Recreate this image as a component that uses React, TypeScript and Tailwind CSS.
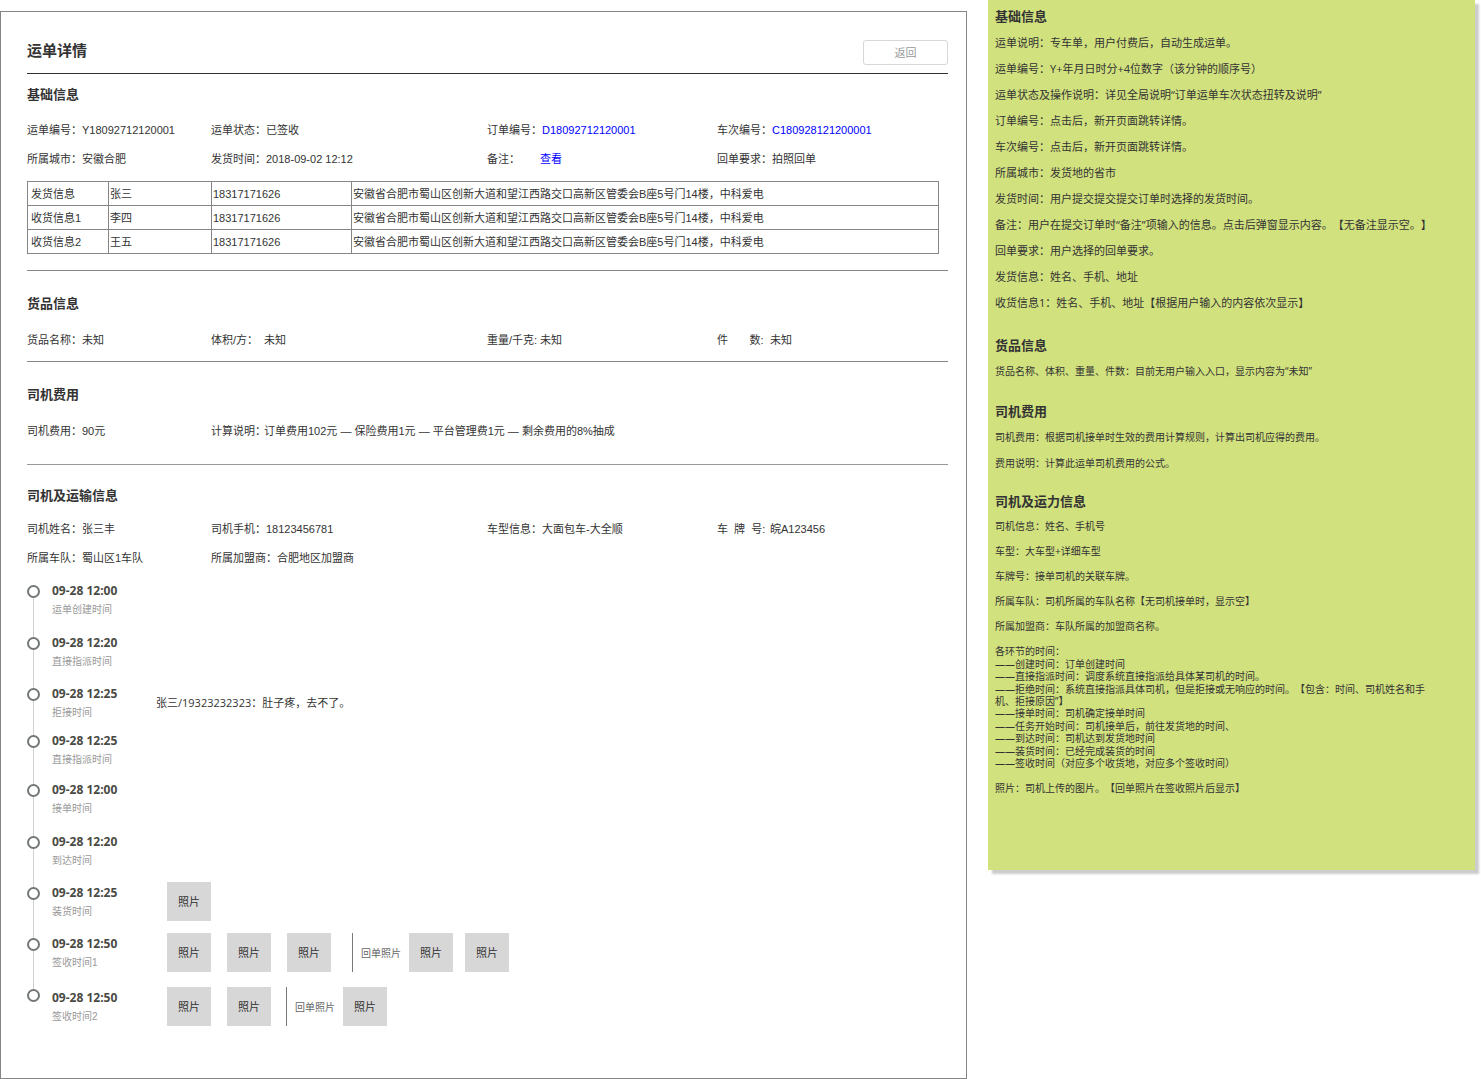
import { ReactNode } from "react";

interface FieldProps {
  label: string;
  children: ReactNode;
}

interface TimelineEvent {
  time: string;
  label: string;
  height: string;
  remark?: string;
  photos?: number;
  receipts?: number;
}

const contacts = [
  { type: "发货信息", name: "张三", phone: "18317171626" },
  { type: "收货信息1", name: "李四", phone: "18317171626" },
  { type: "收货信息2", name: "王五", phone: "18317171626" },
];

const address =
  "安徽省合肥市蜀山区创新大道和望江西路交口高新区管委会B座5号门14楼，中科爱电";

const events: TimelineEvent[] = [
  { time: "09-28 12:00", label: "运单创建时间", height: "min-h-[52px]" },
  { time: "09-28 12:20", label: "直接指派时间", height: "min-h-[51px]" },
  {
    time: "09-28 12:25",
    label: "拒接时间",
    height: "min-h-[47px]",
    remark: "张三/19323232323：肚子疼，去不了。",
  },
  { time: "09-28 12:25", label: "直接指派时间", height: "min-h-[49px]" },
  { time: "09-28 12:00", label: "接单时间", height: "min-h-[52px]" },
  { time: "09-28 12:20", label: "到达时间", height: "min-h-[51px]" },
  { time: "09-28 12:25", label: "装货时间", height: "min-h-[51px]", photos: 1 },
  {
    time: "09-28 12:50",
    label: "签收时间1",
    height: "min-h-[51px]",
    photos: 3,
    receipts: 2,
  },
  {
    time: "09-28 12:50",
    label: "签收时间2",
    height: "min-h-[44px]",
    photos: 2,
    receipts: 1,
  },
];

const basicNotes = [
  "运单说明：专车单，用户付费后，自动生成运单。",
  "运单编号：Y+年月日时分+4位数字（该分钟的顺序号）",
  "运单状态及操作说明：详见全局说明“订单运单车次状态扭转及说明”",
  "订单编号：点击后，新开页面跳转详情。",
  "车次编号：点击后，新开页面跳转详情。",
  "所属城市：发货地的省市",
  "发货时间：用户提交提交提交订单时选择的发货时间。",
  "备注：用户在提交订单时“备注”项输入的信息。点击后弹窗显示内容。【无备注显示空。】",
  "回单要求：用户选择的回单要求。",
  "发货信息：姓名、手机、地址",
  "收货信息1：姓名、手机、地址【根据用户输入的内容依次显示】",
];

const driverNotes = [
  "司机信息：姓名、手机号",
  "车型：大车型+详细车型",
  "车牌号：接单司机的关联车牌。",
  "所属车队：司机所属的车队名称【无司机接单时，显示空】",
  "所属加盟商：车队所属的加盟商名称。",
];

const stepNotes = [
  "各环节的时间：",
  "——创建时间：订单创建时间",
  "——直接指派时间：调度系统直接指派给具体某司机的时间。",
  "——拒绝时间：系统直接指派具体司机，但是拒接或无响应的时间。【包含：时间、司机姓名和手机、拒接原因”】",
  "——接单时间：司机确定接单时间",
  "——任务开始时间：司机接单后，前往发货地的时间、",
  "——到达时间：司机达到发货地时间",
  "——装货时间：已经完成装货的时间",
  "——签收时间（对应多个收货地，对应多个签收时间）",
];

function Field({ label, children }: FieldProps) {
  return (
    <div className="flex whitespace-pre">
      <dt className="min-w-[53px]">{label}</dt>
      <dd>{children}</dd>
    </div>
  );
}

function FieldGrid({ children }: { children: ReactNode }) {
  return (
    <dl className="grid grid-cols-[minmax(0,184fr)_minmax(0,276fr)_minmax(0,230fr)_minmax(0,231fr)] gap-y-[13px] leading-4">
      {children}
    </dl>
  );
}

function SectionTitle({ children }: { children: ReactNode }) {
  return <h2 className="text-[13px] leading-5 font-bold">{children}</h2>;
}

function Photo() {
  return (
    <div className="flex h-[39px] w-11 shrink-0 items-center justify-center bg-[#d7d7d7] pt-px">
      照片
    </div>
  );
}

function EventRow({ event, first, last }: { event: TimelineEvent; first: boolean; last: boolean }) {
  const photos = Array.from({ length: event.photos ?? 0 });
  const receipts = Array.from({ length: event.receipts ?? 0 });

  return (
    <li className={`flex ${event.height}`}>
      <div className="mr-3 flex w-[13px] flex-col items-center">
        <span className={first ? "h-[5px]" : "h-[5px] w-px bg-[#d0d0d0]"} />
        <span className="size-[13px] rounded-full border-2 border-[#737777]" />
        {!last && <span className="w-px flex-1 bg-[#d0d0d0]" />}
      </div>
      <div className={last ? "w-[104px] pt-[6px]" : "w-[104px] pt-[3px]"}>
        <p className="font-['Open_Sans','Noto_Sans_CJK_SC',sans-serif] text-[12px] leading-4 font-bold text-[#4a4a44]">
          {event.time}
        </p>
        <p className="text-[10px] leading-[22px] text-[#999999]">{event.label}</p>
      </div>
      {event.remark && (
        <p className="pt-3 font-['Open_Sans','Noto_Sans_CJK_SC',sans-serif] leading-4">
          {event.remark}
        </p>
      )}
      {event.photos && (
        <div className={last ? "ml-[11px] flex pt-[3px]" : "ml-[11px] flex"}>
          <div className="flex gap-4">
            {photos.map((_, i) => (
              <Photo key={i} />
            ))}
          </div>
          {event.receipts && (
            <div
              className={
                last
                  ? "ml-[15px] flex h-[39px] items-center gap-2 border-l border-[#797979] pl-2"
                  : "ml-[21px] flex h-[39px] items-center gap-2 border-l border-[#797979] pl-2"
              }
            >
              <span className="pt-px text-[10px] text-[#666666]">回单照片</span>
              <div className="flex gap-3">
                {receipts.map((_, i) => (
                  <Photo key={i} />
                ))}
              </div>
            </div>
          )}
        </div>
      )}
    </li>
  );
}

function WaybillDetail() {
  return (
    <main className="mt-[11px] border border-[#868686] pt-7 pr-[18px] pb-[50px] pl-[26px]">
      <header className="flex items-start justify-between border-b border-[#333333] pb-2">
        <h1 className="text-[15px] leading-[22px] font-bold">运单详情</h1>
        <button
          type="button"
          className="h-[25px] w-[85px] cursor-pointer rounded-[3px] border border-[#d7d7d7] pt-px text-[#999999]"
        >
          返回
        </button>
      </header>

      <section className="flex flex-col gap-[17px] border-b border-[#868686] pt-[11px] pb-4">
        <SectionTitle>基础信息</SectionTitle>
        <div className="flex flex-col gap-[14px]">
          <FieldGrid>
            <Field label="运单编号：">Y18092712120001</Field>
            <Field label="运单状态：">已签收</Field>
            <Field label="订单编号：">
              <a href="#order" className="text-[#0000ff]">
                D18092712120001
              </a>
            </Field>
            <Field label="车次编号：">
              <a href="#trip" className="text-[#0000ff]">
                C180928121200001
              </a>
            </Field>
            <Field label="所属城市：">安徽合肥</Field>
            <Field label="发货时间：">2018-09-02 12:12</Field>
            <Field label="备注：">
              <a href="#remark" className="text-[#0000ff]">
                查看
              </a>
            </Field>
            <Field label="回单要求：">拍照回单</Field>
          </FieldGrid>

          <div className="pr-[9px]">
            <table className="w-full table-fixed border-collapse">
              <colgroup>
                <col className="w-[81px]" />
                <col className="w-[103px]" />
                <col className="w-[140px]" />
                <col />
              </colgroup>
              <tbody>
                {contacts.map((contact) => (
                  <tr key={contact.type} className="h-6">
                    <th className="border border-[#868686] pt-px pl-[3px] text-left font-normal">
                      {contact.type}
                    </th>
                    <td className="border border-[#868686] pt-px pl-px">{contact.name}</td>
                    <td className="border border-[#868686] pt-px pl-px">{contact.phone}</td>
                    <td className="border border-[#868686] pt-px pl-px">{address}</td>
                  </tr>
                ))}
              </tbody>
            </table>
          </div>
        </div>
      </section>

      <section className="flex flex-col gap-[18px] border-b border-[#868686] pt-[23px] pb-[13px]">
        <SectionTitle>货品信息</SectionTitle>
        <FieldGrid>
          <Field label="货品名称：">未知</Field>
          <Field label="体积/方：">未知</Field>
          <Field label="重量/千克:">未知</Field>
          <Field label="件       数:">未知</Field>
        </FieldGrid>
      </section>

      <section className="flex flex-col gap-[18px] border-b border-[#999999] pt-[23px] pb-[25px]">
        <SectionTitle>司机费用</SectionTitle>
        <FieldGrid>
          <Field label="司机费用：">90元</Field>
          <Field label="计算说明：">
            订单费用102元 — 保险费用1元 — 平台管理费1元 — 剩余费用的8%抽成
          </Field>
        </FieldGrid>
      </section>

      <section className="flex flex-col gap-[15px] pt-[21px]">
        <SectionTitle>司机及运输信息</SectionTitle>
        <FieldGrid>
          <Field label="司机姓名：">张三丰</Field>
          <Field label="司机手机：">18123456781</Field>
          <Field label="车型信息：">大面包车-大全顺</Field>
          <Field label="车  牌  号:">皖A123456</Field>
          <Field label="所属车队：">蜀山区1车队</Field>
          <Field label="所属加盟商：">合肥地区加盟商</Field>
        </FieldGrid>
      </section>

      <ol className="pt-[14px]">
        {events.map((event, i) => (
          <EventRow
            key={i}
            event={event}
            first={i === 0}
            last={i === events.length - 1}
          />
        ))}
      </ol>
    </main>
  );
}

function NotesTitle({ children }: { children: ReactNode }) {
  return <h2 className="text-[13px] leading-[26px] font-bold">{children}</h2>;
}

function Notes() {
  return (
    <aside className="self-start bg-[#d1e17e] px-[7px] pt-[3px] pb-[76px] font-['Open_Sans','Noto_Sans_CJK_SC',sans-serif] shadow-[4px_4px_2px_#cccccc] [text-spacing-trim:space-all]">
      <NotesTitle>基础信息</NotesTitle>
      <div className="pt-px leading-[26px]">
        {basicNotes.map((note) => (
          <p key={note}>{note}</p>
        ))}
      </div>

      <div className="pt-4 text-[10px] leading-[26px]">
        <NotesTitle>货品信息</NotesTitle>
        <p>货品名称、体积、重量、件数：目前无用户输入入口，显示内容为“未知”</p>
      </div>

      <div className="pt-[14px] text-[10px] leading-[26px]">
        <NotesTitle>司机费用</NotesTitle>
        <p>司机费用：根据司机接单时生效的费用计算规则，计算出司机应得的费用。</p>
        <p>费用说明：计算此运单司机费用的公式。</p>
      </div>

      <div className="pt-3 text-[10px] leading-[25px]">
        <NotesTitle>司机及运力信息</NotesTitle>
        {driverNotes.map((note) => (
          <p key={note}>{note}</p>
        ))}
      </div>

      <div className="pt-[6px] pr-9 text-[10px] leading-3">
        {stepNotes.map((note) => (
          <p key={note} className="odd:mb-px">
            {note}
          </p>
        ))}
        <p className="pt-3">照片：司机上传的图片。【回单照片在签收照片后显示】</p>
      </div>
    </aside>
  );
}

export default function App() {
  return (
    <div className="grid grid-cols-[967fr_487fr] gap-[21px] bg-white pr-[6px] font-['Liberation_Sans','Noto_Sans_CJK_SC',sans-serif] text-[11px] text-[#333333]">
      <WaybillDetail />
      <Notes />
    </div>
  );
}
